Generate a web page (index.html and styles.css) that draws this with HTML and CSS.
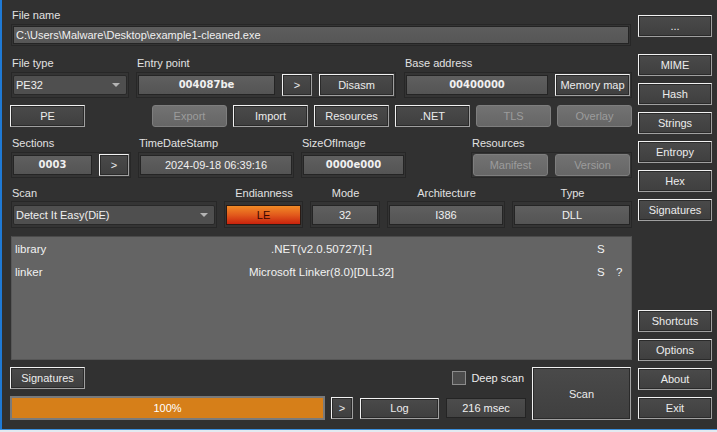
FILE: index.html
```html
<!DOCTYPE html>
<html lang="en">
  <head>
    <meta charset="UTF-8" />
    <meta name="viewport" content="width=device-width, initial-scale=1.0" />
    <title>Detect It Easy</title>
    <link rel="stylesheet" href="styles.css">
  </head>
  <body>
    <div class="app">
      <div class="window">
        <div class="main">
          <div class="group">
            <div class="label">File name</div>
            <div class="frame frame-path">
              <div class="field field-path">C:\Users\Malware\Desktop\example1-cleaned.exe</div>
            </div>
          </div>

          <div class="row row-info">
            <div class="group">
              <div class="label">File type</div>
              <div class="frame">
                <div class="combo">PE32<span class="arrow"></span></div>
              </div>
            </div>
            <div class="group">
              <div class="label">Entry point</div>
              <div class="frame">
                <div class="field bold grow">004087be</div>
                <button class="btn btn-arrow">&gt;</button>
                <button class="btn btn-wide">Disasm</button>
              </div>
            </div>
            <div class="group">
              <div class="label">Base address</div>
              <div class="frame">
                <div class="field bold grow">00400000</div>
                <button class="btn btn-wide">Memory map</button>
              </div>
            </div>
          </div>

          <div class="row row-tools">
            <button class="btn btn-wide">PE</button>
            <div class="tools">
              <button class="btn btn-wide" disabled>Export</button>
              <button class="btn btn-wide">Import</button>
              <button class="btn btn-wide">Resources</button>
              <button class="btn btn-wide">.NET</button>
              <button class="btn btn-wide" disabled>TLS</button>
              <button class="btn btn-wide" disabled>Overlay</button>
            </div>
          </div>

          <div class="row row-header">
            <div class="group">
              <div class="label">Sections</div>
              <div class="frame">
                <div class="field bold field-sections">0003</div>
                <button class="btn btn-arrow">&gt;</button>
              </div>
            </div>
            <div class="group">
              <div class="label">TimeDateStamp</div>
              <div class="frame">
                <div class="field grow">2024-09-18 06:39:16</div>
              </div>
            </div>
            <div class="group">
              <div class="label">SizeOfImage</div>
              <div class="frame">
                <div class="field bold grow">0000e000</div>
              </div>
            </div>
            <div></div>
            <div class="group">
              <div class="label">Resources</div>
              <div class="frame">
                <button class="btn btn-wide" disabled>Manifest</button>
                <button class="btn btn-wide" disabled>Version</button>
              </div>
            </div>
          </div>

          <div class="row row-scan">
            <div class="group">
              <div class="label">Scan</div>
              <div class="frame">
                <div class="combo">Detect It Easy(DiE)<span class="arrow"></span></div>
              </div>
            </div>
            <div class="group centered">
              <div class="label">Endianness</div>
              <div class="frame">
                <div class="field field-le grow">LE</div>
              </div>
            </div>
            <div class="group centered">
              <div class="label">Mode</div>
              <div class="frame">
                <div class="field grow">32</div>
              </div>
            </div>
            <div class="group centered">
              <div class="label">Architecture</div>
              <div class="frame">
                <div class="field grow">I386</div>
              </div>
            </div>
            <div class="group centered">
              <div class="label">Type</div>
              <div class="frame">
                <div class="field grow">DLL</div>
              </div>
            </div>
          </div>

          <div class="results">
            <div class="result">
              <span class="r-type">library</span>
              <span class="r-name">.NET(v2.0.50727)[-]</span>
              <span></span>
              <span>S</span>
              <span></span>
            </div>
            <div class="result">
              <span class="r-type">linker</span>
              <span class="r-name">Microsoft Linker(8.0)[DLL32]</span>
              <span></span>
              <span>S</span>
              <span>?</span>
            </div>
          </div>

          <div class="bottom">
            <div class="bottom-left">
              <div class="bottom-top">
                <button class="btn btn-wide">Signatures</button>
                <label class="check"><span class="box"></span>Deep scan</label>
              </div>
              <div class="bottom-bar">
                <div class="progress">100%</div>
                <button class="btn btn-small">&gt;</button>
                <button class="btn btn-log">Log</button>
                <div class="field field-time">216 msec</div>
              </div>
            </div>
            <button class="btn btn-scan">Scan</button>
          </div>
        </div>

        <div class="side">
          <button class="btn">...</button>
          <button class="btn first">MIME</button>
          <button class="btn">Hash</button>
          <button class="btn">Strings</button>
          <button class="btn">Entropy</button>
          <button class="btn">Hex</button>
          <button class="btn">Signatures</button>
          <button class="btn push">Shortcuts</button>
          <button class="btn">Options</button>
          <button class="btn">About</button>
          <button class="btn">Exit</button>
        </div>
      </div>
      <div class="taskbar"></div>
    </div>
  </body>
</html>
```

FILE: styles.css
```css
html,
body {
  margin: 0;
  padding: 0;
  width: 717px;
  height: 432px;
  overflow: hidden;
  background-color: #313131;
  font-family: "Liberation Sans", Arial, sans-serif;
  font-size: 11px;
  color: #e4e4e4;
}

.app {
  display: flex;
  flex-direction: column;
  height: 432px;
}

.window {
  display: flex;
  height: 429px;
  flex: none;
  border-left: 2px solid #1f7ad6;
  box-sizing: border-box;
}

.taskbar {
  flex: 1;
  border-top: 1px solid #3b8fdc;
  background-color: #e4eaf0;
}

.main {
  width: 621px;
  padding-left: 9px;
  padding-top: 8px;
}

.side {
  width: 74px;
  margin-left: 6px;
  padding-top: 15px;
  padding-bottom: 10px;
  display: flex;
  flex-direction: column;
  gap: 7px;
}

.side .first {
  margin-top: 10px;
}

.side .push {
  margin-top: auto;
}

.label {
  height: 14px;
  line-height: 14px;
  padding-left: 1px;
  color: #e2e2e2;
  white-space: nowrap;
}

.group {
  display: flex;
  flex-direction: column;
  gap: 2px;
}

.group.centered .label {
  text-align: center;
}

.frame {
  display: flex;
  align-items: center;
  gap: 7px;
  height: 26px;
  box-sizing: border-box;
  padding: 1px;
  border: 1px solid #272727;
  background-color: #343434;
}

.frame-path {
  width: 620px;
  height: 22px;
}

.field {
  height: 20px;
  line-height: 18px;
  box-sizing: border-box;
  border: 1px solid #242424;
  background: linear-gradient(#5f5f5f, #545454);
  color: #f0f0f0;
  text-align: center;
  white-space: nowrap;
}

.field-path {
  flex: 1;
  height: 18px;
  line-height: 16px;
  padding-left: 2px;
  text-align: left;
  background: linear-gradient(#5d5d5d, #565656);
}

.grow {
  flex: 1;
}

.bold {
  font-family: "DejaVu Sans", sans-serif;
  font-weight: bold;
  font-size: 10px;
}

.field-sections {
  width: 80px;
}

.field-le {
  background: linear-gradient(#f28a26, #e25a1c 50%, #c9220d);
  color: #3a0600;
  border-color: #2a1a14;
}

.combo {
  position: relative;
  flex: 1;
  height: 20px;
  line-height: 18px;
  box-sizing: border-box;
  padding-left: 2px;
  border: 1px solid #282828;
  border-radius: 2px;
  background-color: #4f4f4f;
  color: #f0f0f0;
}

.arrow {
  position: absolute;
  right: 6px;
  top: 7px;
  width: 0;
  height: 0;
  border-left: 4px solid transparent;
  border-right: 4px solid transparent;
  border-top: 4px solid #b4b4b4;
}

.btn {
  height: 22px;
  box-sizing: border-box;
  padding: 0;
  border: 1px solid;
  border-color: #f2f2f2 #a0a0a0 #a0a0a0 #f2f2f2;
  background: linear-gradient(#4a4a4a, #3f3f3f);
  box-shadow: inset 1px 1px 0 #2a2a2a, inset -1px -1px 0 #2a2a2a;
  color: #ececec;
  font-family: inherit;
  font-size: 11px;
  cursor: pointer;
  white-space: nowrap;
}

.btn:disabled {
  border: 1px solid #7e7e7e;
  border-radius: 3px;
  background: linear-gradient(#727272, #666666);
  box-shadow: none;
  color: #9c9c9c;
  cursor: default;
}

.btn-arrow {
  width: 30px;
  flex: none;
}

.btn-wide {
  width: 75px;
  flex: none;
}

.row {
  display: grid;
  column-gap: 7px;
}

.row-info {
  margin-top: 10px;
  grid-template-columns: 118px 260px 1fr;
}

.row-info .group + .group + .group {
  margin-left: 1px;
}

.row-tools {
  margin-top: 7px;
  margin-left: -1px;
  display: flex;
  justify-content: space-between;
}

.tools {
  display: flex;
  gap: 6px;
}

.row-header {
  margin-top: 9px;
  grid-template-columns: 120px 156px 105px 1fr 161px;
}

.row-scan {
  margin-top: 8px;
  grid-template-columns: 206px 79px 70px 118px 1fr;
}

.row-scan .group {
  gap: 1px;
}

.row-scan .frame {
  height: 27px;
}

.results {
  margin-top: 8px;
  height: 124px;
  box-sizing: border-box;
  padding-top: 1px;
  border: 1px solid #575757;
  border-top-color: #4a4a4a;
  background-color: #646464;
  color: #f2f2f2;
}

.result {
  display: grid;
  grid-template-columns: 80px 1fr 46px 19px 15px;
  height: 23px;
  line-height: 22px;
  font-size: 11.5px;
}

.r-type {
  padding-left: 3px;
}

.r-name {
  text-align: center;
}

.bottom {
  display: flex;
  margin-top: 7px;
  margin-left: -1px;
}

.bottom-left {
  width: 516px;
}

.bottom-top {
  display: flex;
  justify-content: space-between;
  align-items: center;
  height: 22px;
}

.check {
  display: flex;
  align-items: center;
  gap: 5px;
  padding-right: 2px;
  color: #ececec;
  font-size: 11px;
}

.box {
  width: 14px;
  height: 14px;
  box-sizing: border-box;
  border: 1px solid #8c8c8c;
  background-color: #4c4c4c;
}

.bottom-bar {
  display: flex;
  align-items: center;
  margin-top: 7px;
  height: 24px;
}

.progress {
  width: 315px;
  height: 24px;
  box-sizing: border-box;
  border: 2px solid #7a7a7a;
  background-color: #d67f19;
  color: #ffffff;
  text-align: center;
  line-height: 20px;
}

.btn-small {
  width: 22px;
  margin-left: 6px;
}

.btn-log {
  width: 79px;
  height: 21px;
  margin-left: 7px;
}

.field-time {
  width: 80px;
  margin-left: 7px;
  background: linear-gradient(#4c4c4c, #434343);
}

.btn-scan {
  width: 99px;
  height: 53px;
  margin-left: 6px;
}
```
